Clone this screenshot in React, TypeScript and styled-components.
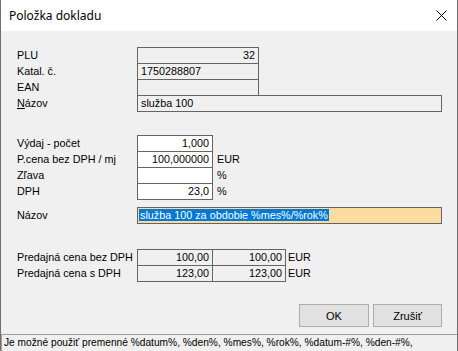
import React from 'react';
import styled, { createGlobalStyle } from 'styled-components';

const GlobalStyle = createGlobalStyle`
  html, body {
    margin: 0;
    padding: 0;
    background: #ffffff;
  }
  * {
    box-sizing: border-box;
  }
`;

const Window = styled.div`
  width: 458px;
  height: 351px;
  display: flex;
  flex-direction: column;
  background: #f0f0f0;
  border-left: 1px solid #707070;
  border-right: 1px solid #707070;
  font-family: 'Liberation Sans', Arial, sans-serif;
  font-size: 10.8px;
  color: #000;
  overflow: hidden;
`;

const TitleBar = styled.div`
  height: 31px;
  flex: none;
  background: #ffffff;
  display: flex;
  align-items: center;
  justify-content: space-between;
  padding: 0 10px 0 8px;
`;

const Title = styled.span`
  font-family: 'Noto Sans', 'Open Sans', sans-serif;
  font-size: 12px;
  color: #000;
`;

const CloseIcon = () => (
  <svg width="11" height="11" viewBox="0 0 11 11">
    <path d="M0.5 0.5 L10.5 10.5 M10.5 0.5 L0.5 10.5" stroke="#000" strokeWidth="1" />
  </svg>
);

const Body = styled.div`
  flex: 1;
  display: flex;
  flex-direction: column;
  padding: 16px 15px 0 16px;
`;

const Group = styled.div<{ $gap: number }>`
  display: flex;
  flex-direction: column;
  margin-top: ${(p) => p.$gap}px;
`;

// stacked rows are 16px high, their 17px boxes overlap by one border
const Row = styled.div<{ $stack?: boolean }>`
  display: flex;
  align-items: flex-start;
  height: ${(p) => (p.$stack ? 16 : 17)}px;
`;

const Label = styled.div`
  width: 120px;
  flex: none;
  white-space: nowrap;
  line-height: 17px;
`;

const Field = styled.div<{ $w: number; $fill?: string; $align?: 'left' | 'right'; $join?: boolean }>`
  width: ${(p) => p.$w}px;
  height: 17px;
  flex: none;
  border: 1px solid #646464;
  background: ${(p) => p.$fill || '#f0f0f0'};
  text-align: ${(p) => p.$align || 'left'};
  padding: 0 3px;
  margin-left: ${(p) => (p.$join ? -1 : 0)}px;
  line-height: 15px;
  white-space: nowrap;
  overflow: hidden;
`;

const Unit = styled.span<{ $gap: number }>`
  margin-left: ${(p) => p.$gap}px;
  line-height: 17px;
`;

const Selected = styled.span`
  background: #0078d7;
  color: #fff;
  padding: 0 1px;
  margin-left: -2px;
`;

const Accel = styled.span`
  text-decoration: underline;
`;

const Buttons = styled.div`
  display: flex;
  justify-content: flex-end;
  gap: 4px;
  margin-top: 23px;
`;

const Button = styled.button<{ $w: number }>`
  width: ${(p) => p.$w}px;
  height: 23px;
  background: #e1e1e1;
  border: 1px solid #adadad;
  font-family: 'Liberation Sans', Arial, sans-serif;
  font-size: 11px;
  color: #000;
  padding: 0;
`;

const StatusBar = styled.div`
  margin-top: auto;
  height: 17px;
  flex: none;
  border-top: 1px solid #a0a0a0;
  border-left: 1px solid #a0a0a0;
  background: #f0f0f0;
  padding: 0 2px;
  font-size: 10.2px;
  line-height: 16px;
  white-space: nowrap;
  overflow: hidden;
`;

export default function App() {
  return (
    <>
      <GlobalStyle />
      <Window>
        <TitleBar>
          <Title>Položka dokladu</Title>
          <CloseIcon />
        </TitleBar>
        <Body>
          <Group $gap={0}>
            <Row $stack>
              <Label>PLU</Label>
              <Field $w={122} $align="right">32</Field>
            </Row>
            <Row $stack>
              <Label>Katal. č.</Label>
              <Field $w={122}>1750288807</Field>
            </Row>
            <Row $stack>
              <Label>EAN</Label>
              <Field $w={122} />
            </Row>
            <Row $stack>
              <Label>
                <Accel>N</Accel>ázov
              </Label>
              <Field $w={305}>služba 100</Field>
            </Row>
          </Group>

          <Group $gap={24}>
            <Row $stack>
              <Label>Výdaj - počet</Label>
              <Field $w={76} $fill="#ffffff" $align="right">1,000</Field>
            </Row>
            <Row $stack>
              <Label>P.cena bez DPH / mj</Label>
              <Field $w={76} $fill="#ffffff" $align="right">100,000000</Field>
              <Unit $gap={4}>EUR</Unit>
            </Row>
            <Row $stack>
              <Label>Zľava</Label>
              <Field $w={76} $fill="#ffffff" $align="right" />
              <Unit $gap={4}>%</Unit>
            </Row>
            <Row $stack>
              <Label>DPH</Label>
              <Field $w={76} $fill="#ffffff" $align="right">23,0</Field>
              <Unit $gap={4}>%</Unit>
            </Row>
          </Group>

          <Group $gap={8}>
            <Row>
              <Label>Názov</Label>
              <Field $w={305} $fill="#fedb9f">
                <Selected>služba 100 za obdobie %mes%/%rok%</Selected>
              </Field>
            </Row>
          </Group>

          <Group $gap={25}>
            <Row $stack>
              <Label>Predajná cena bez DPH</Label>
              <Field $w={76} $align="right">100,00</Field>
              <Field $w={74} $align="right" $join>100,00</Field>
              <Unit $gap={2}>EUR</Unit>
            </Row>
            <Row $stack>
              <Label>Predajná cena s DPH</Label>
              <Field $w={76} $align="right">123,00</Field>
              <Field $w={74} $align="right" $join>123,00</Field>
              <Unit $gap={2}>EUR</Unit>
            </Row>
          </Group>

          <Buttons>
            <Button $w={70}>OK</Button>
            <Button $w={69}>Zrušiť</Button>
          </Buttons>
        </Body>
        <StatusBar>
          Je možné použiť premenné %datum%, %den%, %mes%, %rok%, %datum-#%, %den-#%,
        </StatusBar>
      </Window>
    </>
  );
}
